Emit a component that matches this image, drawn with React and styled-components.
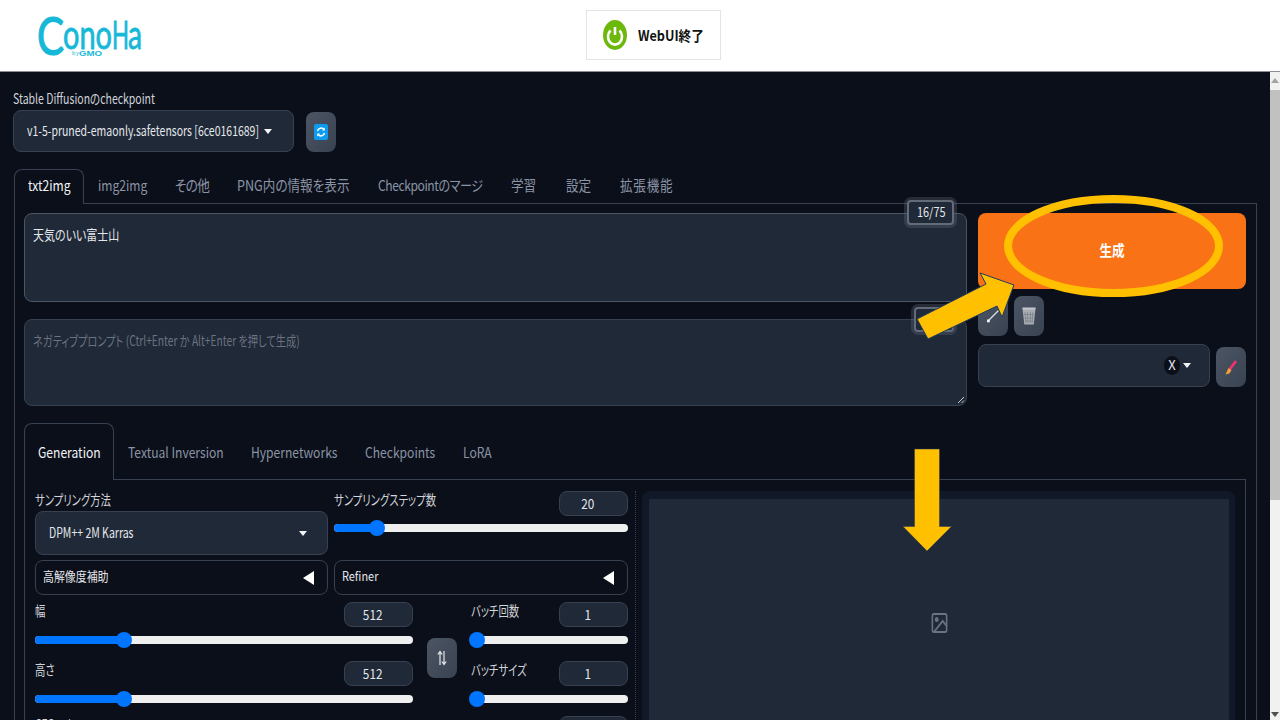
// Libs & Frameworks
import styled, { createGlobalStyle, css } from "styled-components";

const Global = createGlobalStyle`
  html, body {
    margin: 0;
    height: 100%;
    overflow: hidden;
    background: #0b0f19;
    font-family: "Noto Sans CJK JP", "Noto Sans", sans-serif;
  }
`;

// the screenshot is squeezed horizontally, so the text is too
const squeezed = css`
  display: block;
  width: fit-content;
  white-space: nowrap;
  transform: scaleX(0.84);
  transform-origin: left center;
  font-feature-settings: "palt";
`;

// Style
const Page = styled.div`
  position: relative;
  width: 1280px;
  height: 720px;
  overflow: hidden;
`;

const Header = styled.header`
  height: 71px;
  background: #fff;
  border-bottom: 1px solid #8a8d93;
  display: flex;
  align-items: center;
  padding-left: 37px;
`;

const Logo = styled.svg`
  width: 106px;
  height: 42px;
  flex: none;
`;

const ShutdownButton = styled.div`
  margin-left: 443px;
  margin-top: -1px;
  width: 135px;
  height: 50px;
  box-sizing: border-box;
  border: 1px solid #e4e4e4;
  display: flex;
  align-items: center;
  padding-left: 16px;
  gap: 11px;
`;

const ShutdownLabel = styled.span`
  ${squeezed}
  font-size: 14px;
  font-weight: 700;
  color: #111;
  transform: scaleX(0.9);
`;

const Body = styled.div`
  display: flex;
  height: 648px;
`;

const Main = styled.main`
  flex: 1;
  min-width: 0;
  padding: 19px 13px 0 14px;
  box-sizing: border-box;
`;

const Scrollbar = styled.div`
  width: 10px;
  flex: none;
  background: #f1f1f1;
  display: flex;
  flex-direction: column;
  align-items: center;
`;

const ScrollArrow = styled.div`
  width: 0;
  height: 0;
  margin: ${(p) => (p.$down ? "auto 0 3px" : "6px 0 7px")};
  border-left: 4px solid transparent;
  border-right: 4px solid transparent;
  ${(p) =>
    p.$down
      ? "border-top: 5px solid #505050;"
      : "border-bottom: 5px solid #a3a3a3;"}
`;

const ScrollThumb = styled.div`
  width: 100%;
  height: 410px;
  background: #c1c1c1;
`;

const FieldLabel = styled.span`
  ${squeezed}
  font-size: 14px;
  line-height: 18px;
  margin-top: -1px;
  color: #d1d5db;
  transform: scaleX(0.74);
`;

const CheckpointLabel = styled(FieldLabel)`
  margin-left: -1px;
  margin-top: 0;
  height: 19px;
  line-height: 14px;
  transform: scaleX(0.75);
`;

const CheckpointRow = styled.div`
  display: flex;
  align-items: flex-end;
  gap: 12px;
  margin-left: -1px;
`;

const Dropdown = styled.div`
  box-sizing: border-box;
  width: ${(p) => p.$w}px;
  height: ${(p) => p.$h}px;
  background: #1f2937;
  border: 1px solid #374151;
  border-radius: 8px;
  display: flex;
  align-items: center;
  padding: 0 ${(p) => p.$pr || 14}px 0 13px;
`;

const DropdownText = styled.span`
  ${squeezed}
  font-size: 14px;
  color: #e5e7eb;
  flex: 1;
  width: 0;
  margin-top: -2px;
  transform: scaleX(0.75);
`;

const Caret = styled.span`
  width: 0;
  height: 0;
  flex: none;
  border-left: 4px solid transparent;
  border-right: 4px solid transparent;
  border-top: 5px solid #f3f4f6;
`;

const ToolButton = styled.div`
  width: 30px;
  height: 40px;
  flex: none;
  border-radius: 8px;
  background: linear-gradient(to bottom right, #4b5563, #394250);
  display: flex;
  align-items: center;
  justify-content: center;
`;

const Tabs = styled.nav`
  display: flex;
  margin-top: ${(p) => p.$mt}px;
  height: ${(p) => p.$h}px;
`;

const Tab = styled.div`
  box-sizing: border-box;
  width: ${(p) => p.$w}px;
  flex: none;
  padding: ${(p) => p.$pt}px 0 0 14px;
  position: relative;
  z-index: 1;
  ${(p) =>
    p.$active &&
    css`
      background: #0b0f19;
      border: 1px solid #374151;
      border-bottom: none;
      border-radius: 8px 8px 0 0;
      padding-left: 13px;
      height: calc(100% + 1px);
    `}
`;

const TabLabel = styled.span`
  ${squeezed}
  font-size: ${(p) => p.$size || 15}px;
  letter-spacing: ${(p) => p.$spacing || 0}px;
  line-height: 22px;
  color: ${(p) => (p.$active ? "#f3f4f6" : "#8a94a6")};
`;

const Panel = styled.section`
  border: 1px solid #374151;
  border-bottom: none;
  height: 600px;
  box-sizing: border-box;
  padding: 9px 10px 0 9px;
`;

const PromptGrid = styled.div`
  display: flex;
  gap: 11px;
`;

const PromptColumn = styled.div`
  width: 943px;
  flex: none;
  display: flex;
  flex-direction: column;
  gap: 17px;
`;

const PromptBox = styled.div`
  position: relative;
  height: ${(p) => p.$h}px;
  box-sizing: border-box;
  background: #1f2937;
  border: 1px solid ${(p) => (p.$strong ? "#4b5563" : "#374151")};
  border-radius: 8px;
  padding: 9px 8px;
`;

const PromptText = styled.span`
  ${squeezed}
  font-size: 14px;
  line-height: 22px;
  color: ${(p) => (p.$muted ? "#6b7280" : "#e5e7eb")};
  transform: scaleX(${(p) => p.$sx});
`;

const TokenCounter = styled.div`
  position: absolute;
  right: 12px;
  top: ${(p) => p.$top}px;
  width: ${(p) => p.$w}px;
  height: 25px;
  box-sizing: border-box;
  background: #1f2937;
  border: 2px solid #636b79;
  border-radius: 4px;
  box-shadow: 0 0 0 3px rgba(107, 114, 128, 0.3);
  z-index: 2;
  display: flex;
  align-items: center;
  padding-left: 8px;
`;

const TokenText = styled.span`
  ${squeezed}
  font-size: 13px;
  margin-top: -2px;
  color: #e5e7eb;
`;

const Resizer = styled.svg`
  position: absolute;
  right: 1px;
  bottom: 1px;
  width: 8px;
  height: 8px;
`;

const ActionColumn = styled.div`
  width: 268px;
  flex: none;
  display: flex;
  flex-direction: column;
`;

const GenerateButton = styled.div`
  height: 76px;
  background: #f97316;
  border-radius: 8px;
  display: flex;
  align-items: center;
  justify-content: center;
`;

const GenerateLabel = styled.span`
  ${squeezed}
  font-size: 15px;
  font-weight: 700;
  color: #fff;
  margin-top: -3px;
  transform-origin: center;
`;

const ActionRow = styled.div`
  display: flex;
  gap: 6px;
  margin-top: ${(p) => p.$mt}px;
  align-items: flex-end;
`;

const ClearBadge = styled.span`
  width: 16px;
  height: 19px;
  border-radius: 50%;
  background: #0b0f19;
  color: #e5e7eb;
  font-size: 13px;
  line-height: 18px;
  text-align: center;
  margin-right: 3px;
  flex: none;
`;

const DropdownFill = styled.span`
  flex: 1;
`;

const InnerPanel = styled.section`
  border: 1px solid #374151;
  border-bottom: none;
  height: 300px;
  box-sizing: border-box;
  padding: 11px 10px 0 10px;
  display: flex;
`;

const SettingsColumn = styled.div`
  width: 593px;
  flex: none;
  display: flex;
  flex-direction: column;
`;

const Divider = styled.div`
  width: 0;
  margin: 0 6px 0 7px;
  border-left: 1px dotted #374151;
`;

const TopRow = styled.div`
  display: flex;
  gap: 6px;
`;

const SplitCell = styled.div`
  flex: ${(p) => (p.$wide ? "0 0 294px" : "0 0 293px")};
  min-width: 0;
`;

const LabelRow = styled.div`
  display: flex;
  justify-content: space-between;
  align-items: flex-start;
  height: 25px;
`;

const LabelSmall = styled.div`
  display: flow-root;
  height: 20px;
`;

const NumberBox = styled.div`
  width: 69px;
  height: 25px;
  flex: none;
  box-sizing: border-box;
  background: #1f2937;
  border: 1px solid #374151;
  border-radius: 8px;
  color: #e5e7eb;
  display: flex;
  align-items: center;
  justify-content: center;
  padding-right: 12px;
`;

const NumberText = styled.span`
  ${squeezed}
  font-size: 14px;
  margin-top: -2px;
  transform-origin: center;
`;

const Track = styled.div`
  position: relative;
  height: 8px;
  margin: ${(p) => p.$mt ?? 9}px 0 4px;
  background: #efefef;
  border-radius: 4px;
`;

const TrackFill = styled.div`
  height: 100%;
  background: #0075ff;
  border-radius: 4px 0 0 4px;
`;

const Thumb = styled.div`
  position: absolute;
  top: -4px;
  width: 16px;
  height: 16px;
  margin-left: -8px;
  border-radius: 50%;
  background: #0075ff;
`;

const Accordion = styled.div`
  height: 35px;
  box-sizing: border-box;
  border: 1px solid #374151;
  border-radius: 8px;
  display: flex;
  align-items: center;
  justify-content: space-between;
  padding: 0 13px 0 6.5px;
`;

const AccordionLabel = styled.span`
  ${squeezed}
  font-size: 13px;
  margin-top: -4px;
  color: #e5e7eb;
`;

const Triangle = styled.span`
  width: 0;
  height: 0;
  border-top: 7px solid transparent;
  border-bottom: 7px solid transparent;
  border-right: 11px solid #fff;
`;

const AccordionRow = styled(TopRow)`
  margin-top: 5px;
`;

const SizeRows = styled.div`
  display: flex;
  margin-top: 7px;
`;

const SizeColumn = styled.div`
  width: 378px;
  flex: none;
  display: flex;
  flex-direction: column;
  gap: 13px;
`;

const SwapCell = styled.div`
  width: 58px;
  flex: none;
  display: flex;
  justify-content: center;
  padding-top: 36px;
  box-sizing: border-box;
`;

const BatchColumn = styled.div`
  width: 157px;
  flex: none;
  display: flex;
  flex-direction: column;
  gap: 13px;
`;

const CfgRow = styled.div`
  display: flex;
  justify-content: space-between;
  margin-top: 9px;
`;

const OutputFrame = styled.div`
  flex: 1;
  height: 280px;
  background: #111827;
  border-radius: 8px 8px 0 0;
  padding: 8px 6px 0 7px;
  box-sizing: border-box;
`;

const OutputCanvas = styled.div`
  height: 248px;
  background: #1f2937;
  display: flex;
  align-items: center;
  justify-content: center;
`;

const Annotations = styled.svg`
  position: absolute;
  left: 0;
  top: 0;
  width: 1280px;
  height: 720px;
  pointer-events: none;
  z-index: 5;
`;

// Data
const mainTabs = [
  ["txt2img", 70, 14.4],
  ["img2img", 77, 14.4],
  ["その他", 62, 15, -0.7],
  ["PNG内の情報を表示", 141, 15],
  ["Checkpointのマージ", 133, 14.4, -0.5],
  ["学習", 55, 15],
  ["設定", 54, 15],
  ["拡張機能", 80, 15, 0.9],
];

const genTabs = [
  ["Generation", 90],
  ["Textual Inversion", 123],
  ["Hypernetworks", 114],
  ["Checkpoints", 98],
  ["LoRA", 60],
];

// JSX
const Slider = ({ pos, mt }) => (
  <Track $mt={mt}>
    <TrackFill style={{ width: pos }} />
    <Thumb style={{ left: pos }} />
  </Track>
);

const SliderField = ({ label, value, pos, mt }) => (
  <div>
    <LabelRow>
      <FieldLabel>{label}</FieldLabel>
      <NumberBox>
        <NumberText>{value}</NumberText>
      </NumberBox>
    </LabelRow>
    <Slider pos={pos} mt={mt} />
  </div>
);

const App = () => {
  return (
    <Page>
      <Global />
      <Header>
        <Logo viewBox="0 0 106 42">
          <text x="0" y="40" fontFamily="Lato" fontSize="53" fill="#16b8d8" stroke="#16b8d8" strokeWidth="1.200" textLength="27" lengthAdjust="spacingAndGlyphs">C</text>
          <text x="26" y="33.500" fontFamily="Lato" fontSize="40" fill="#16b8d8" stroke="#16b8d8" strokeWidth="0.800" textLength="49" lengthAdjust="spacingAndGlyphs">ono</text>
          <text x="75" y="33.500" fontFamily="Lato" fontSize="39" fill="#16b8d8" stroke="#16b8d8" strokeWidth="0.800" textLength="17" lengthAdjust="spacingAndGlyphs">H</text>
          <text x="91" y="33.500" fontFamily="Lato" fontSize="40" fill="#16b8d8" stroke="#16b8d8" strokeWidth="0.800" textLength="14" lengthAdjust="spacingAndGlyphs">a</text>
          <text x="35" y="40" fontFamily="Liberation Sans" fontSize="6" fill="#16b8d8" textLength="7">by</text>
          <text x="42" y="40.500" fontFamily="Liberation Sans" fontWeight="700" fontSize="8" fill="#16b8d8" textLength="23" lengthAdjust="spacingAndGlyphs">GMO</text>
        </Logo>
        <ShutdownButton>
          <svg width="24" height="30" viewBox="0 0 24 30">
            <ellipse cx="12" cy="15" rx="12" ry="15" fill="#6cb80c" />
            <path d="M7.500 10.500a7 8 0 1 0 9 0" fill="none" stroke="#fff" strokeWidth="2.600" />
            <path d="M12 7v8" stroke="#fff" strokeWidth="2.600" />
          </svg>
          <ShutdownLabel>WebUI終了</ShutdownLabel>
        </ShutdownButton>
      </Header>

      <Body>
        <Main>
          <CheckpointLabel>Stable Diffusionのcheckpoint</CheckpointLabel>
          <CheckpointRow>
            <Dropdown $w={281} $h={42} $pr={21}>
              <DropdownText>v1-5-pruned-emaonly.safetensors [6ce0161689]</DropdownText>
              <Caret />
            </Dropdown>
            <ToolButton>
              <svg width="14" height="16" viewBox="0 0 14 16">
                <rect width="14" height="16" rx="2" fill="#0d9bf0" />
                <path d="M3.500 7a3.600 3.600 0 0 1 6.400-1.500M10.500 9a3.600 3.600 0 0 1-6.400 1.500" fill="none" stroke="#fff" strokeWidth="1.500" />
                <path d="M10.800 3.400v3h-2.800zM3.200 12.600v-3h2.800z" fill="#fff" />
              </svg>
            </ToolButton>
          </CheckpointRow>

          <Tabs $mt={17} $h={34}>
            {mainTabs.map(([name, w, size, spacing], i) => (
              <Tab key={name} $w={w} $active={i === 0} $pt={i === 0 ? 4 : 5}>
                <TabLabel $active={i === 0} $size={size} $spacing={spacing}>
                  {name}
                </TabLabel>
              </Tab>
            ))}
          </Tabs>

          <Panel>
            <PromptGrid>
              <PromptColumn>
                <PromptBox $h={89} $strong>
                  <TokenCounter $top={-14} $w={47}>
                    <TokenText>16/75</TokenText>
                  </TokenCounter>
                  <PromptText $sx={0.785}>天気のいい富士山</PromptText>
                </PromptBox>
                <PromptBox $h={87}>
                  <TokenCounter $top={-13} $w={40} />
                  <PromptText $muted $sx={0.73}>
                    ネガティブプロンプト (Ctrl+Enter か Alt+Enter を押して生成)
                  </PromptText>
                  <Resizer viewBox="0 0 8 8">
                    <path d="M1 7l6-6M4.500 7l2.500-2.500" stroke="#c9ccd1" strokeWidth="1" />
                  </Resizer>
                </PromptBox>
              </PromptColumn>
              <ActionColumn>
                <GenerateButton>
                  <GenerateLabel>生成</GenerateLabel>
                </GenerateButton>
                <ActionRow $mt={7}>
                  <ToolButton>
                    <svg width="14" height="14" viewBox="0 0 14 14">
                      <path d="M12.500 1.500L2 12" stroke="#dbe4ee" strokeWidth="1.200" />
                      <rect x="1" y="10.500" width="2.800" height="2.800" fill="#eef2f6" />
                    </svg>
                  </ToolButton>
                  <ToolButton>
                    <svg width="14" height="18" viewBox="0 0 14 18">
                      <path d="M0.500 1.500h13l-1.800 16h-9.400z" fill="#a9adb3" />
                      <path d="M3 5l1 11M5.500 5l.4 11M8.500 5l-.4 11M11 5l-1 11M2 7.500h10M2.500 11h9M3 14h8" stroke="#6f7580" strokeWidth="0.600" />
                      <rect x="0.500" y="0.500" width="13" height="2" fill="#c4c7cc" />
                    </svg>
                  </ToolButton>
                </ActionRow>
                <ActionRow $mt={8}>
                  <Dropdown $w={232} $h={43} $pr={18}>
                    <DropdownFill />
                    <ClearBadge>X</ClearBadge>
                    <Caret />
                  </Dropdown>
                  <ToolButton>
                    <svg width="12" height="15" viewBox="0 0 12 15">
                      <path d="M11 1L4.500 9.500" stroke="#f0326f" strokeWidth="2.800" />
                      <path d="M3.500 8l3 2.200-2.200 3.300-3.800 1z" fill="#f2a03a" />
                    </svg>
                  </ToolButton>
                </ActionRow>
              </ActionColumn>
            </PromptGrid>

            <Tabs $mt={17} $h={56}>
              {genTabs.map(([name, w], i) => (
                <Tab key={name} $w={w} $active={i === 0} $pt={i === 0 ? 17 : 18}>
                  <TabLabel $active={i === 0} $size={14.4}>
                    {name}
                  </TabLabel>
                </Tab>
              ))}
            </Tabs>

            <InnerPanel>
              <SettingsColumn>
                <TopRow>
                  <SplitCell>
                    <LabelSmall>
                      <FieldLabel>サンプリング方法</FieldLabel>
                    </LabelSmall>
                    <Dropdown $w={293} $h={44} $pr={20}>
                      <DropdownText>DPM++ 2M Karras</DropdownText>
                      <Caret />
                    </Dropdown>
                  </SplitCell>
                  <SplitCell $wide>
                    <SliderField label="サンプリングステップ数" value="20" pos="43px" mt={8} />
                  </SplitCell>
                </TopRow>
                <AccordionRow>
                  <SplitCell>
                    <Accordion>
                      <AccordionLabel>高解像度補助</AccordionLabel>
                      <Triangle />
                    </Accordion>
                  </SplitCell>
                  <SplitCell $wide>
                    <Accordion>
                      <AccordionLabel>Refiner</AccordionLabel>
                      <Triangle />
                    </Accordion>
                  </SplitCell>
                </AccordionRow>
                <SizeRows>
                  <SizeColumn>
                    <SliderField label="幅" value="512" pos="89px" />
                    <SliderField label="高さ" value="512" pos="89px" />
                  </SizeColumn>
                  <SwapCell>
                    <ToolButton>
                      <svg width="10" height="16" viewBox="0 0 10 16">
                        <path d="M3 15V2M0.800 4.500L3 1.500l2.200 3M7 1v13M4.800 11.500L7 14.500l2.200-3" fill="none" stroke="#e5e7eb" strokeWidth="1.200" />
                      </svg>
                    </ToolButton>
                  </SwapCell>
                  <BatchColumn>
                    <SliderField label="バッチ回数" value="1" pos="6px" />
                    <SliderField label="バッチサイズ" value="1" pos="6px" />
                  </BatchColumn>
                </SizeRows>
                <CfgRow>
                  <FieldLabel>CFG スケール</FieldLabel>
                  <NumberBox />
                </CfgRow>
              </SettingsColumn>
              <Divider />
              <OutputFrame>
                <OutputCanvas>
                  <svg width="19" height="24" viewBox="0 0 24 24" preserveAspectRatio="none" fill="none" stroke="#6b7280" strokeWidth="2">
                    <rect x="3" y="3" width="18" height="18" rx="2" />
                    <circle cx="8.500" cy="8.500" r="1.500" fill="#6b7280" />
                    <path d="M21 15l-5-5L5 21" />
                  </svg>
                </OutputCanvas>
              </OutputFrame>
            </InnerPanel>
          </Panel>
        </Main>
        <Scrollbar>
          <ScrollArrow />
          <ScrollThumb />
          <ScrollArrow $down />
        </Scrollbar>
      </Body>

      <Annotations viewBox="0 0 1280 720">
        <ellipse cx="1113.500" cy="246" rx="105.500" ry="47" fill="none" stroke="#ffc000" strokeWidth="8" />
        <polygon points="917,319 986,284 980,273 1014,285 1002,317 997,306 928,339" fill="#ffc000" stroke="#1f3a5f" strokeWidth="1" />
        <polygon points="914.500,449 939.500,449 939.500,526.500 951.500,526.500 927,551 903,526.500 914.500,526.500" fill="#ffc000" stroke="#1f3a5f" strokeWidth="0.500" />
      </Annotations>
    </Page>
  );
};

export default App;
